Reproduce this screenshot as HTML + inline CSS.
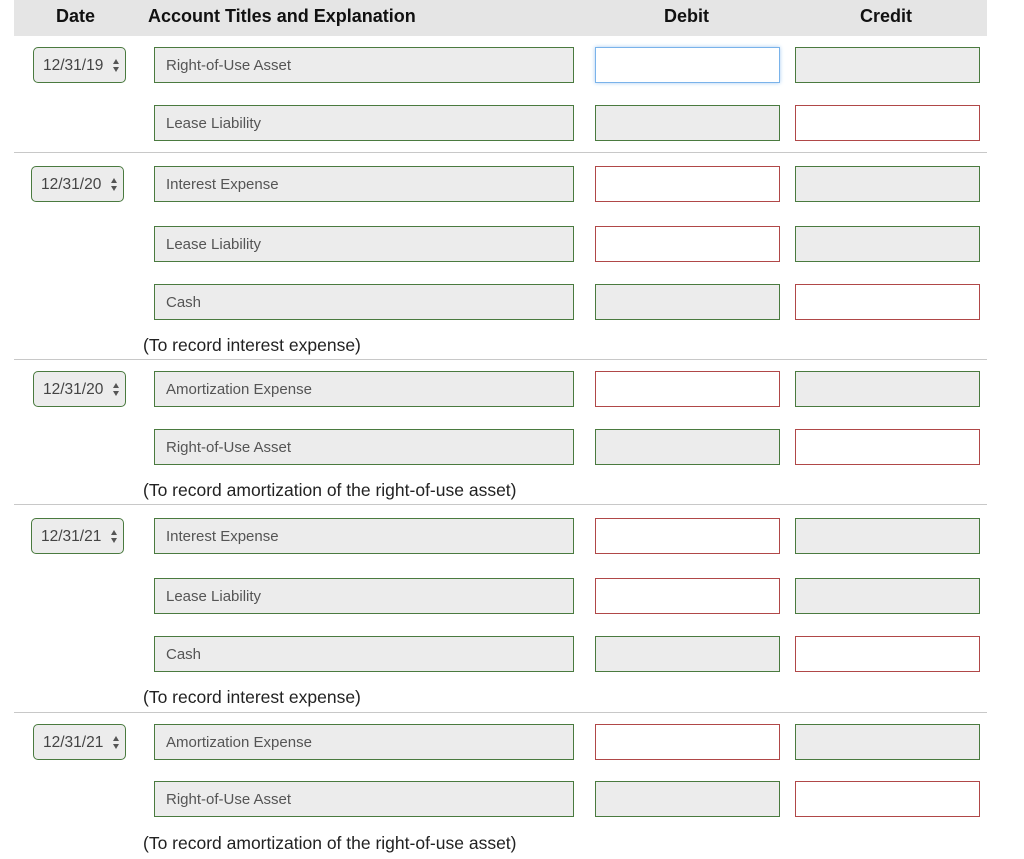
<!DOCTYPE html>
<html><head><meta charset="utf-8"><style>
body{margin:0;width:1024px;height:859px;background:#fff;font-family:"Liberation Sans",sans-serif;position:relative;overflow:hidden}
.hd{position:absolute;left:14px;top:0;width:973px;height:36px;background:#e5e5e5}
.h{position:absolute;top:6px;font-weight:bold;font-size:18px;color:#111}
.f{position:absolute;height:36px;box-sizing:border-box;border:1px solid #4a7a3f;background:#ececec;font-size:15px;color:#555;line-height:36px;padding-left:11px}
.a{left:154px;width:420px}
.d{left:595px;width:185px}
.c{left:795px;width:185px}
.r{border-color:#b04848;background:#fff}
.b{border-color:#7ab3ea;background:#fff;box-shadow:0 0 4px #a8cdf2}
.s{position:absolute;height:36px;width:93px;box-sizing:border-box;border:1px solid #4a7a3f;border-radius:5px;background:#ececec;font-size:15.5px;color:#444;line-height:36px;padding-left:9px}
.s:after{content:"";position:absolute;right:6px;top:11px;border:3.5px solid transparent;border-bottom:5px solid #555;border-top:0}
.s:before{content:"";position:absolute;right:6px;top:19px;border:3.5px solid transparent;border-top:5px solid #555;border-bottom:0}
.sep{position:absolute;left:14px;width:973px;height:1px;background:#c8c8c8}
.n{position:absolute;left:143px;font-size:17.5px;color:#222}
</style></head><body>
<div class="hd"></div>
<div class="h" style="left:56px">Date</div>
<div class="h" style="left:148px">Account Titles and Explanation</div>
<div class="h" style="left:664px">Debit</div>
<div class="h" style="left:860px">Credit</div>

<div class="s" style="left:33px;top:47px">12/31/19</div>
<div class="f a" style="top:47px">Right-of-Use Asset</div><div class="f d b" style="top:47px"></div><div class="f c" style="top:47px"></div>
<div class="f a" style="top:105px">Lease Liability</div><div class="f d" style="top:105px"></div><div class="f c r" style="top:105px"></div>
<div class="sep" style="top:152px"></div>

<div class="s" style="left:31px;top:166px">12/31/20</div>
<div class="f a" style="top:166px">Interest Expense</div><div class="f d r" style="top:166px"></div><div class="f c" style="top:166px"></div>
<div class="f a" style="top:226px">Lease Liability</div><div class="f d r" style="top:226px"></div><div class="f c" style="top:226px"></div>
<div class="f a" style="top:284px">Cash</div><div class="f d" style="top:284px"></div><div class="f c r" style="top:284px"></div>
<div class="n" style="top:335px">(To record interest expense)</div>
<div class="sep" style="top:359px"></div>

<div class="s" style="left:33px;top:371px">12/31/20</div>
<div class="f a" style="top:371px">Amortization Expense</div><div class="f d r" style="top:371px"></div><div class="f c" style="top:371px"></div>
<div class="f a" style="top:429px">Right-of-Use Asset</div><div class="f d" style="top:429px"></div><div class="f c r" style="top:429px"></div>
<div class="n" style="top:480px">(To record amortization of the right-of-use asset)</div>
<div class="sep" style="top:504px"></div>

<div class="s" style="left:31px;top:518px">12/31/21</div>
<div class="f a" style="top:518px">Interest Expense</div><div class="f d r" style="top:518px"></div><div class="f c" style="top:518px"></div>
<div class="f a" style="top:578px">Lease Liability</div><div class="f d r" style="top:578px"></div><div class="f c" style="top:578px"></div>
<div class="f a" style="top:636px">Cash</div><div class="f d" style="top:636px"></div><div class="f c r" style="top:636px"></div>
<div class="n" style="top:687px">(To record interest expense)</div>
<div class="sep" style="top:712px"></div>

<div class="s" style="left:33px;top:724px">12/31/21</div>
<div class="f a" style="top:724px">Amortization Expense</div><div class="f d r" style="top:724px"></div><div class="f c" style="top:724px"></div>
<div class="f a" style="top:781px">Right-of-Use Asset</div><div class="f d" style="top:781px"></div><div class="f c r" style="top:781px"></div>
<div class="n" style="top:833px">(To record amortization of the right-of-use asset)</div>
</body></html>
